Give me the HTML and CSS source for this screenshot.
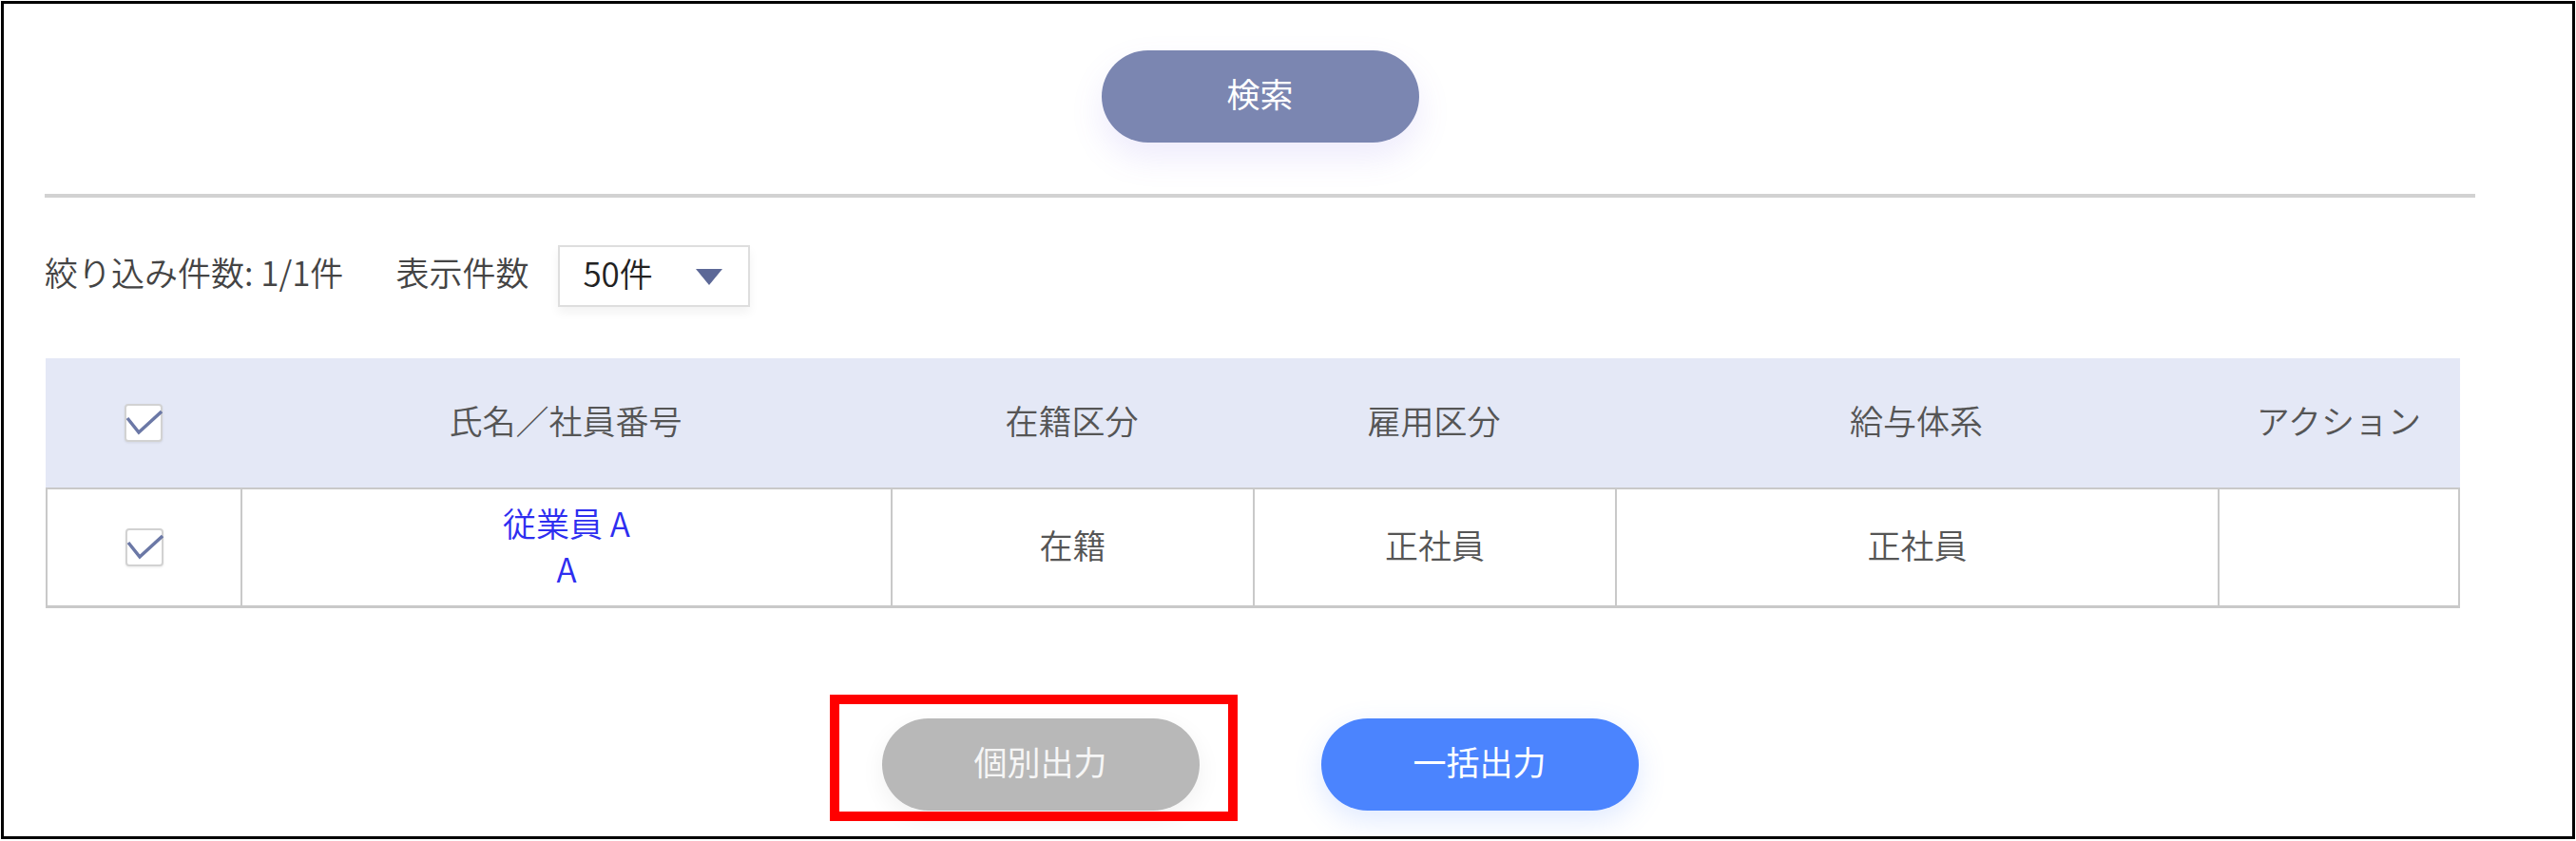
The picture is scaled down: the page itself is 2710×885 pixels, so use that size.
FILE: index.html
```html
<!DOCTYPE html>
<html lang="ja">
<head>
<meta charset="utf-8">
<title>従業員検索</title>
<link rel="stylesheet" href="styles.css">
</head>
<body>
<div class="frame">
  <div class="content">
    <div class="search-area">
      <button class="btn btn-search">検索</button>
    </div>
    <hr class="divider">
    <div class="filter-row">
      <span class="label count">絞り込み件数: 1/1件</span>
      <span class="label show">表示件数</span>
      <div class="select">
        <span class="select-value">50件</span>
        <span class="select-arrow"></span>
      </div>
    </div>
    <div class="grid" role="table">
      <div class="th" role="columnheader">
        <svg class="cb" viewBox="0 0 40 40" width="40" height="40"><rect x="1" y="1" width="38" height="38" rx="3" fill="#fff" stroke="#d2d2d2" stroke-width="2"/><polyline points="3,15 15,30 39,8" fill="none" stroke="#6b78a6" stroke-width="3.5" stroke-linejoin="miter"/></svg>
      </div>
      <div class="th" role="columnheader"><span class="txt">氏名／社員番号</span></div>
      <div class="th" role="columnheader"><span class="txt">在籍区分</span></div>
      <div class="th" role="columnheader"><span class="txt">雇用区分</span></div>
      <div class="th" role="columnheader"><span class="txt">給与体系</span></div>
      <div class="th" role="columnheader"><span class="txt">アクション</span></div>

      <div class="td first" role="cell">
        <svg class="cb" viewBox="0 0 40 40" width="40" height="40"><rect x="1" y="1" width="38" height="38" rx="3" fill="#fff" stroke="#d2d2d2" stroke-width="2"/><polyline points="3,15 15,30 39,8" fill="none" stroke="#6b78a6" stroke-width="3.5" stroke-linejoin="miter"/></svg>
      </div>
      <div class="td" role="cell"><a class="emp-link" href="#">従業員 A<br>A</a></div>
      <div class="td" role="cell"><span class="txt">在籍</span></div>
      <div class="td" role="cell"><span class="txt">正社員</span></div>
      <div class="td" role="cell"><span class="txt">正社員</span></div>
      <div class="td last" role="cell"></div>
    </div>
    <div class="actions">
      <button class="btn btn-gray">個別出力</button>
      <button class="btn btn-blue">一括出力</button>
    </div>
  </div>
  <div class="highlight"></div>
</div>
</body>
</html>
```

FILE: styles.css
```css
html, body {
  margin: 0;
  padding: 0;
  background: #fff;
}
body {
  font-family: "Noto Sans CJK JP", "Noto Sans", sans-serif;
  font-size: 35px;
  font-weight: 350;
  color: #555;
}
.frame {
  position: relative;
  box-sizing: border-box;
  width: 2708px;
  height: 882px;
  margin: 1px;
  border: 3px solid #000;
  overflow: hidden;
}
.content {
  margin-left: 43px;
  width: 2557px;
}
.search-area {
  padding-top: 49px;
  display: flex;
  justify-content: center;
}
.btn {
  box-sizing: border-box;
  width: 334px;
  height: 97px;
  border: none;
  border-radius: 49px;
  font-family: "Noto Sans CJK JP", "Noto Sans", sans-serif;
  font-size: 35px;
  font-weight: 400;
  color: #fff;
  padding: 0 0 9px 0;
  line-height: 1;
  cursor: pointer;
}
.btn-search {
  background: #7b86b1;
  box-shadow: 0 16px 34px rgba(120, 100, 230, 0.13);
}
.divider {
  margin: 54px 0 0 0;
  height: 4px;
  border: none;
  background: #d2d2d2;
}
.filter-row {
  margin-top: 50px;
  display: flex;
  align-items: center;
  height: 65px;
}
.label {
  color: #444;
  line-height: 1;
  position: relative;
  top: -5px;
}
.count {
  margin-right: 55px;
}
.show {
  margin-right: 31px;
}
.select {
  box-sizing: border-box;
  width: 202px;
  height: 65px;
  border: 2px solid #dedede;
  background: #fff;
  box-shadow: 0 6px 10px rgba(0, 0, 0, 0.05);
  display: flex;
  align-items: center;
  justify-content: space-between;
  padding: 0 27px 0 24px;
}
.select-value {
  color: #222;
  line-height: 1;
  position: relative;
  top: -4px;
}
.select-arrow {
  width: 0;
  height: 0;
  border-left: 14px solid transparent;
  border-right: 14px solid transparent;
  border-top: 17px solid #5c6897;
  margin-top: 2px;
}
.grid {
  margin-top: 54px;
  margin-left: 1px;
  display: grid;
  grid-template-columns: 205px 684px 381px 381px 634px 255px;
  width: 2540px;
}
.th {
  height: 136px;
  background: #e4e8f6;
  display: flex;
  align-items: center;
  justify-content: center;
  color: #555;
  white-space: nowrap;
}
.txt {
  line-height: 1;
  position: relative;
  top: -4px;
}
.td {
  box-sizing: border-box;
  height: 127px;
  border-top: 2px solid #c9c9c9;
  border-bottom: 3px solid #c9c9c9;
  border-left: 2px solid #c9c9c9;
  display: flex;
  align-items: center;
  justify-content: center;
  color: #555;
  text-align: center;
  line-height: 48px;
}
.td.last {
  border-right: 2px solid #c9c9c9;
}
.cb {
  display: block;
  filter: drop-shadow(0 1px 1px rgba(0, 0, 0, 0.08));
}
.emp-link {
  color: #2e2ef0;
  text-decoration: none;
  position: relative;
  top: -2px;
}
.actions {
  margin-top: 116px;
  display: flex;
  justify-content: center;
  gap: 128px;
}
.btn-gray {
  background: #b8b8b8;
  color: #f6f6f6;
  box-shadow: 0 8px 26px rgba(0, 0, 0, 0.06);
}
.btn-blue {
  background: #4b84fe;
  box-shadow: 0 10px 30px rgba(75, 132, 254, 0.18);
}
.highlight {
  position: absolute;
  left: 869px;
  top: 727px;
  width: 429px;
  height: 133px;
  box-sizing: border-box;
  border: 10px solid #ff0000;
  pointer-events: none;
}
```
